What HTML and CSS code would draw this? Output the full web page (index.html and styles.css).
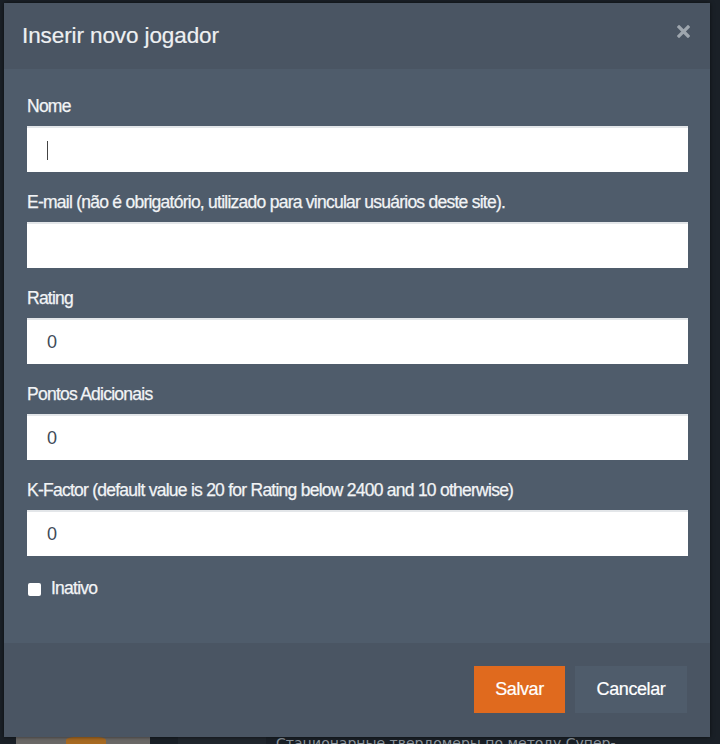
FILE: index.html
```html
<!DOCTYPE html>
<html lang="pt">
<head>
<meta charset="utf-8">
<title>Inserir novo jogador</title>
<link rel="stylesheet" href="styles.css">
</head>
<body>
<div class="backdrop">
  <div class="bg-bottom">
    <div class="bg-photo"><span class="bg-flame"></span></div>
    <div class="bg-panel"></div>
    <div class="bg-text">Стационарные твердомеры по методу Супер-</div>
  </div>
  <div class="modal">
    <div class="modal-header">
      <h4 class="modal-title">Inserir novo jogador</h4>
      <span class="close">
        <svg width="13" height="13" viewBox="0 0 13 13"><path d="M2 2 L11 11 M11 2 L2 11" stroke="#9ea6ae" stroke-width="3.2" stroke-linecap="square"/></svg>
      </span>
    </div>
    <div class="modal-body">
      <div class="form-group">
        <label class="lbl">Nome</label>
        <div class="input"><span class="caret"></span></div>
      </div>
      <div class="form-group">
        <label class="lbl">E-mail (não é obrigatório, utilizado para vincular usuários deste site).</label>
        <div class="input"></div>
      </div>
      <div class="form-group">
        <label class="lbl">Rating</label>
        <div class="input">0</div>
      </div>
      <div class="form-group">
        <label class="lbl">Pontos Adicionais</label>
        <div class="input">0</div>
      </div>
      <div class="form-group">
        <label class="lbl">K-Factor (default value is 20 for Rating below 2400 and 10 otherwise)</label>
        <div class="input">0</div>
      </div>
      <div class="check-row">
        <span class="checkbox"></span>
        <span class="lbl">Inativo</span>
      </div>
    </div>
    <div class="modal-footer">
      <button class="btn btn-primary">Salvar</button>
      <button class="btn btn-default">Cancelar</button>
    </div>
  </div>
</div>
</body>
</html>
```

FILE: styles.css
```css
html, body {
  margin: 0;
  padding: 0;
  height: 100%;
}
body {
  background: #161b21;
  font-family: "Liberation Sans", Arial, sans-serif;
  overflow: hidden;
}
.backdrop {
  position: relative;
  width: 720px;
  height: 744px;
  background: #1a2027;
  padding: 3px 0 0 4px;
  box-sizing: border-box;
}
.bg-bottom {
  position: absolute;
  left: 0;
  right: 0;
  bottom: 0;
  height: 14px;
  display: flex;
  align-items: flex-end;
}
.bg-photo {
  width: 134px;
  height: 14px;
  margin-left: 16px;
  background: #6a6866;
  position: relative;
}
.bg-flame {
  position: absolute;
  left: 50px;
  bottom: 0;
  width: 40px;
  height: 8px;
  background: #a86a22;
  border-radius: 50% 50% 0 0;
}
.bg-panel {
  width: 88px;
  height: 14px;
  margin-left: 28px;
  background: #20262d;
}
.bg-text {
  color: #8c959d;
  font-family: "DejaVu Sans", sans-serif;
  font-size: 14px;
  line-height: 14px;
  margin-left: 10px;
  height: 8px;
  overflow: hidden;
  white-space: nowrap;
}
.modal {
  position: relative;
  width: 706px;
  background: #4f5c6b;
  box-shadow: 0 0 4px rgba(0,0,0,0.6);
}
.modal-header {
  height: 66px;
  background: #4a5563;
  display: flex;
  align-items: center;
  justify-content: space-between;
  padding: 0 20px 0 18px;
}
.modal-title {
  margin: 0;
  font-size: 22.5px;
  font-weight: normal;
  color: #eef0f2;
  letter-spacing: -0.1px;
  padding-bottom: 1px;
  -webkit-text-stroke: 0.2px currentColor;
}
.close {
  display: flex;
  margin-top: -10px;
}
.modal-body {
  padding: 27px 22px 45px 23px;
}
.form-group {
  margin-bottom: 20px;
}
.lbl {
  display: block;
  font-size: 17.5px;
  line-height: 20px;
  color: #f2f4f6;
  letter-spacing: -0.75px;
  margin-bottom: 10px;
  -webkit-text-stroke: 0.25px currentColor;
}
.input {
  height: 46px;
  box-sizing: border-box;
  background: #fff;
  border-top: 2px solid #e3e6e9;
  padding: 0 20px;
  display: flex;
  align-items: center;
  font-size: 18px;
  color: #3f4b58;
}
.caret {
  width: 1px;
  height: 19px;
  background: #444;
}
.check-row {
  display: flex;
  align-items: center;
  height: 20px;
  margin-top: 22px;
}
.check-row .lbl {
  margin: 0 0 0 10px;
}
.checkbox {
  width: 13px;
  height: 13px;
  background: #fff;
  border-radius: 2px;
  margin-left: 1px;
  margin-top: 2px;
}
.modal-footer {
  height: 94px;
  box-sizing: border-box;
  background: #4a5563;
  display: flex;
  justify-content: flex-end;
  align-items: flex-start;
  gap: 10px;
  padding: 23px 23px 0 0;
}
.btn {
  height: 47px;
  border: none;
  font-family: "Liberation Sans", Arial, sans-serif;
  font-size: 18px;
  letter-spacing: -0.4px;
  color: #fff;
  padding: 0;
  cursor: pointer;
  -webkit-text-stroke: 0.2px currentColor;
}
.btn-primary {
  width: 91px;
  background: #e06a1e;
}
.btn-default {
  width: 112px;
  background: #4f5c6b;
}
```
